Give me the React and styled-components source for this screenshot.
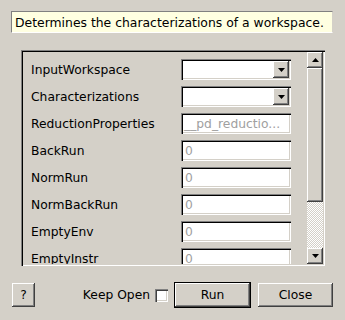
import React from "react";
import styled, { createGlobalStyle } from "styled-components";

const GlobalStyle = createGlobalStyle`
  html, body {
    margin: 0;
    padding: 0;
    background: #d4d0c8;
  }
  * {
    box-sizing: border-box;
  }
`;

const raised = `
  background: #d4d0c8;
  box-shadow: inset -1px -1px #404040, inset 1px 1px #ffffff, inset -2px -2px #808080;
`;

const sunken = `
  box-shadow: inset 1px 1px #808080, inset 2px 2px #000000, inset -1px -1px #ffffff, inset -2px -2px #d4d0c8;
`;

const Dialog = styled.div`
  width: 345px;
  height: 320px;
  background: #d4d0c8;
  font-family: "DejaVu Sans", "Liberation Sans", sans-serif;
  font-size: 12.3px;
  color: #000;
  display: flex;
  flex-direction: column;
  padding: 11px 12px 0 11px;
  overflow: hidden;
`;

const Summary = styled.div`
  height: 22px;
  background: #ffffe1;
  border: 1px solid #808080;
  border-right-color: #d4d0c8;
  border-bottom-color: #ffffff;
  display: flex;
  align-items: center;
  padding-left: 3px;
  font-size: 12.4px;
  white-space: nowrap;
`;

const ScrollFrame = styled.div`
  margin: 17px 8px 0 10px;
  height: 216px;
  padding: 2px;
  display: flex;
  ${sunken}
`;

const Viewport = styled.div`
  flex: 1;
  overflow: hidden;
  display: grid;
  grid-template-columns: 150px 110px;
  grid-auto-rows: 21px;
  row-gap: 6px;
  align-content: start;
  padding: 7px 0 0 8px;
`;

const Label = styled.div`
  display: flex;
  align-items: center;
  padding-top: 1px;
  white-space: nowrap;
`;

const Combo = styled.div`
  position: relative;
  background: #fff;
  ${sunken}
`;

const ComboButton = styled.div`
  position: absolute;
  top: 2px;
  right: 2px;
  width: 16px;
  height: 17px;
  display: flex;
  align-items: center;
  justify-content: center;
  ${raised}
`;

const Field = styled.div`
  background: #fff;
  color: #a0a0a0;
  display: flex;
  align-items: center;
  padding-left: ${(p) => p.$indent}px;
  white-space: nowrap;
  overflow: hidden;
  ${sunken}
`;

const ScrollBar = styled.div`
  width: 16px;
  display: flex;
  flex-direction: column;
`;

const ArrowButton = styled.div`
  width: 16px;
  height: 16px;
  display: flex;
  align-items: center;
  justify-content: center;
  ${raised}
`;

const Thumb = styled.div`
  height: 134px;
  ${raised}
`;

const Trough = styled.div`
  flex: 1;
  background: repeating-conic-gradient(#ffffff 0 25%, #d4d0c8 0 50%) 0 0 / 2px 2px;
`;

const ButtonRow = styled.div`
  margin-top: 16px;
  height: 26px;
  display: flex;
  align-items: center;
`;

const PushButton = styled.button`
  font: inherit;
  color: #000;
  border: none;
  padding: 0;
  width: ${(p) => p.$w}px;
  height: 24px;
  margin-left: ${(p) => p.$ml || 0}px;
  ${raised}
`;

const DefaultButton = styled(PushButton)`
  height: 26px;
  border: 1px solid #000;
`;

const KeepOpen = styled.span`
  margin-left: auto;
  white-space: nowrap;
`;

const CheckBox = styled.span`
  width: 13px;
  height: 13px;
  margin-left: 5px;
  background: #fff;
  box-shadow: inset 1px 1px #808080, inset 2px 2px #404040, inset -1px -1px #ffffff, inset -2px -2px #d4d0c8;
`;

const Arrow = ({ down }) => (
  <svg width="7" height="4" viewBox="0 0 7 4">
    <polygon points={down ? "0,0 7,0 3.5,4" : "0,4 7,4 3.5,0"} fill="#000" />
  </svg>
);

const props = [
  { name: "InputWorkspace", type: "combo" },
  { name: "Characterizations", type: "combo" },
  { name: "ReductionProperties", value: "__pd_reductio...", indent: 3 },
  { name: "BackRun", value: "0", indent: 4 },
  { name: "NormRun", value: "0", indent: 4 },
  { name: "NormBackRun", value: "0", indent: 4 },
  { name: "EmptyEnv", value: "0", indent: 4 },
  { name: "EmptyInstr", value: "0", indent: 4 },
];

export default function App() {
  return (
    <>
      <GlobalStyle />
      <Dialog>
        <Summary>Determines the characterizations of a workspace.</Summary>
        <ScrollFrame>
          <Viewport>
            {props.map((p) => (
              <React.Fragment key={p.name}>
                <Label>{p.name}</Label>
                {p.type === "combo" ? (
                  <Combo>
                    <ComboButton>
                      <Arrow down />
                    </ComboButton>
                  </Combo>
                ) : (
                  <Field $indent={p.indent}>{p.value}</Field>
                )}
              </React.Fragment>
            ))}
          </Viewport>
          <ScrollBar>
            <ArrowButton>
              <Arrow />
            </ArrowButton>
            <Thumb />
            <Trough />
            <ArrowButton>
              <Arrow down />
            </ArrowButton>
          </ScrollBar>
        </ScrollFrame>
        <ButtonRow>
          <PushButton $w={23} $ml={1}>?</PushButton>
          <KeepOpen>Keep Open</KeepOpen>
          <CheckBox />
          <DefaultButton $w={77} $ml={6}>Run</DefaultButton>
          <PushButton $w={75} $ml={7}>Close</PushButton>
        </ButtonRow>
      </Dialog>
    </>
  );
}
